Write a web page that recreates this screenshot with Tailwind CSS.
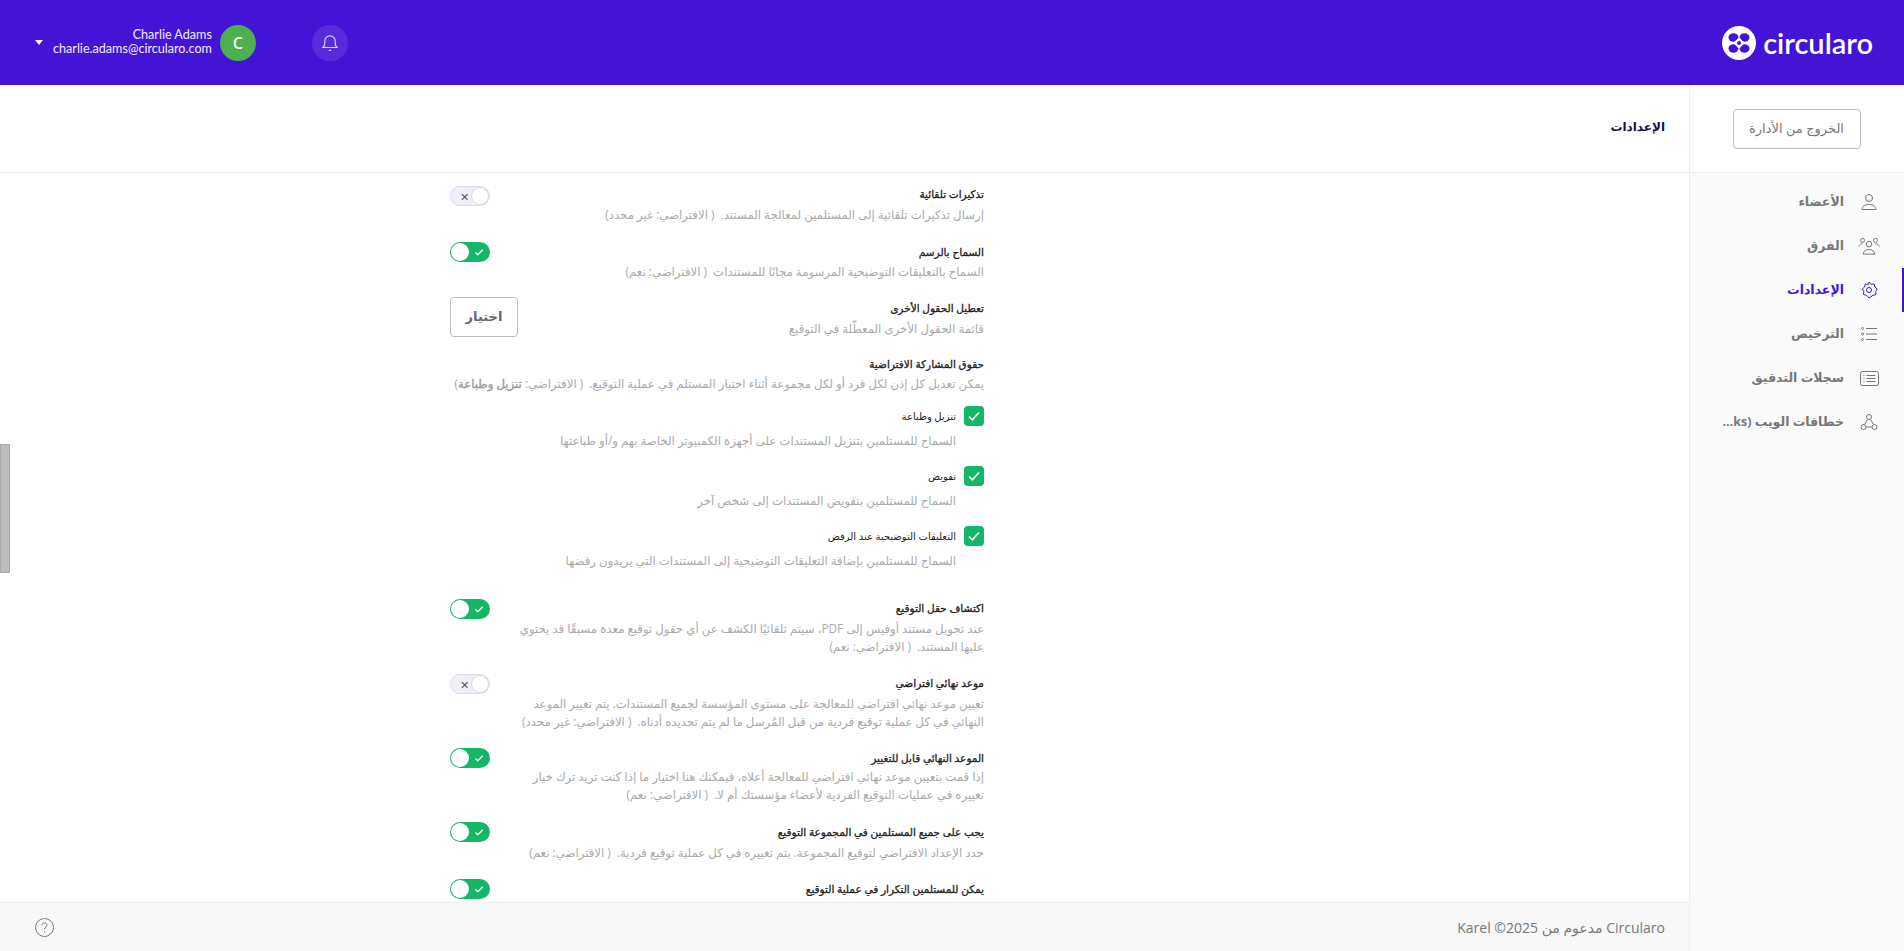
<!DOCTYPE html>
<html lang="ar" dir="rtl">
<head>
  <meta charset="UTF-8" />
  <title>Circularo - الإعدادات</title>
  <script src="https://cdn.jsdelivr.net/npm/@tailwindcss/browser@4"></script>
</head>
<body class="h-[951px] overflow-hidden bg-white font-['Open_Sans','DejaVu_Sans',sans-serif]">

  <!-- Header -->
  <header class="h-[85px] bg-[#4314d6] flex items-center justify-between pr-[31px] pl-[35px]">
    <div dir="ltr" class="flex items-center gap-[7px]">
      <svg class="w-[34px] h-[34px]" viewBox="0 0 34 34">
        <circle cx="17" cy="17" r="17" fill="#fff" />
        <g fill="#4314d6">
          <ellipse cx="11.500" cy="11.500" rx="5" ry="4.200" />
          <ellipse cx="22.500" cy="11.500" rx="5" ry="4.200" />
          <ellipse cx="11.500" cy="22.500" rx="5" ry="4.200" />
          <ellipse cx="22.500" cy="22.500" rx="5" ry="4.200" />
          <rect x="13" y="13" width="8" height="8" fill="#fff" transform="rotate(45 17 17)" />
          <circle cx="17" cy="17" r="2" />
        </g>
      </svg>
      <span class="text-white text-[29px] leading-none font-semibold font-['Lato',sans-serif]">circularo</span>
    </div>
    <div class="flex items-center gap-[56px]">
      <div class="w-9 h-9 rounded-full bg-white/10 flex items-center justify-center">
        <svg class="w-[18px] h-[18px]" viewBox="0 0 18 18" fill="none" stroke="#d8ceff" stroke-width="1.200">
          <path d="M2 13.500h14c-1.300-1.200-1.800-2.400-1.800-4.500V7A5.200 5.200 0 0 0 3.800 7v2c0 2.100-.5 3.300-1.800 4.500z" />
          <path d="M7.800 16c.8.600 1.600.600 2.400 0" />
        </svg>
      </div>
      <div class="flex items-center gap-2">
        <div class="w-9 h-9 rounded-full bg-[#4caf50] text-white flex items-center justify-center text-[16px] font-semibold">C</div>
        <div dir="ltr" class="-mt-px text-right text-[#f1edff] text-[12.6px] leading-[14px] font-['Lato',sans-serif]">
          <div>Charlie Adams</div>
          <div>charlie.adams@circularo.com</div>
        </div>
        <div class="w-0 h-0 border-x-[4px] border-x-transparent border-t-[5px] border-t-white mr-[2px]"></div>
      </div>
    </div>
  </header>

  <div class="flex h-[866px]">
    <!-- Sidebar -->
    <aside class="w-[215px] shrink-0 border-l border-[#eeeeee] bg-[#fafafa] flex flex-col">
      <div class="h-[88px] bg-white border-b border-[#eeeeee] flex items-center justify-center">
        <button class="w-[128px] h-10 mr-[1px] rounded border border-[#bdbdbd] bg-white text-[13px] text-[#777777]">الخروج من الأدارة</button>
      </div>
      <nav class="pt-[7px] text-[12.5px] font-bold text-[#777777]">
        <a class="h-11 flex items-center gap-[16px] pr-[26px]">
          <svg class="w-[18px] h-[18px]" viewBox="0 0 18 18" fill="none" stroke="#777777" stroke-width="1"><circle cx="9" cy="5" r="3.500" /><path d="M2 16.500c0-3 2.500-5 7-5s7 2 7 5z" /></svg>
          <span>الأعضاء</span>
        </a>
        <a class="h-11 flex items-center gap-[16px] pr-[26px]">
          <svg class="w-[18px] h-[18px] scale-125" viewBox="0 0 18 18" fill="none" stroke="#777777" stroke-width=".8"><circle cx="9" cy="7.500" r="2.200" /><path d="M4.500 15.500c0-2.200 1.800-3.700 4.500-3.700s4.500 1.500 4.500 3.700z" /><circle cx="3.800" cy="4.500" r="1.600" /><circle cx="14.200" cy="4.500" r="1.600" /><path d="M.8 9.500c.4-1.500 1.500-2.300 3-2.300M17.200 9.500c-.4-1.500-1.500-2.300-3-2.300" /></svg>
          <span>الفرق</span>
        </a>
        <a class="relative h-11 flex items-center gap-[16px] pr-[26px] text-[#4314d6]">
          <span class="absolute right-0 top-0 w-[2px] h-11 bg-[#4314d6]"></span>
          <svg class="w-[18px] h-[18px]" viewBox="0 0 18 18" fill="none" stroke="#4314d6" stroke-width="1"><path d="M9 1l2 2.300 3.200-.300.700 3 2.300 2-1.500 2.500.3 3-3 .8L9 17l-2.500-2.700-3-.8.300-3L2.300 8l2.300-2 .7-3 3.200.3z" stroke-linejoin="round" /><circle cx="9" cy="9" r="2.500" /></svg>
          <span>الإعدادات</span>
        </a>
        <a class="h-11 flex items-center gap-[16px] pr-[26px]">
          <svg class="w-[18px] h-[18px]" viewBox="0 0 18 18" fill="none" stroke="#777777" stroke-width="1"><path d="M6 3.500h11M6 9h11M6 14.500h11" /><circle cx="2.500" cy="3.500" r="1" /><circle cx="2.500" cy="9" r="1" /><circle cx="2.500" cy="14.500" r="1" /></svg>
          <span>الترخيص</span>
        </a>
        <a class="h-11 flex items-center gap-[16px] pr-[25px]">
          <svg class="w-[19px] h-[15px]" viewBox="0 0 19 15" fill="none" stroke="#777777" stroke-width="1"><rect x=".5" y=".5" width="18" height="14" rx="2" /><path d="M6.500 4.500h9M6.500 7.500h9M6.500 10.500h9M3.500 4.500h1M3.500 7.500h1M3.500 10.500h1" /></svg>
          <span>سجلات التدقيق</span>
        </a>
        <a class="h-11 flex items-center gap-[16px] pr-[26px]">
          <svg class="w-[18px] h-[18px] shrink-0" viewBox="0 0 18 18" fill="none" stroke="#777777" stroke-width="1"><circle cx="9" cy="4" r="2.500" /><circle cx="3.500" cy="14" r="2.500" /><circle cx="14.500" cy="14" r="2.500" /><path d="M7.500 6.500L4.500 11.500M10.500 6.500l3 5M6 14h6" /></svg>
          <span class="w-[126px] truncate">خطافات الويب (Webhooks)</span>
        </a>
      </nav>
    </aside>

    <!-- Main -->
    <div class="flex-1 flex flex-col min-w-0">
      <div class="h-[88px] shrink-0 border-b border-[#eeeeee] flex items-center pr-6">
        <h1 class="text-[12px] font-bold text-[#1a1047] -mt-[3px]">الإعدادات</h1>
      </div>

      <main class="relative flex-1 overflow-hidden">
        <!-- scrollbar handle -->
        <div class="absolute left-0 top-[271px] w-[10px] h-[129px] bg-[#bdbdbd] border border-[#aaaaaa]"></div>

        <div class="w-[534px] mr-[705px] pt-[11px] text-[11.75px]">
          <div class="flex justify-between items-start">
            <div>
              <h3 class="text-[10.5px] leading-5 [-webkit-text-stroke:0.3px_#222222] text-[#222222]">تذكيرات تلقائية</h3>
              <p class="mt-px leading-[18px] text-[#aaaaaa]">إرسال تذكيرات تلقائية إلى المستلمين لمعالجة المستند.&nbsp; ( الافتراضي: غير محدد)</p>
            </div>
            <div class="mt-[2px] w-10 h-5 rounded-full bg-[#f0eef8] border border-[#dddbe8] flex items-center justify-between">
              <div class="w-[18px] h-[18px] rounded-full bg-white border border-[#dddbe8]"></div>
              <span class="ml-[9px] text-[11px] leading-none text-[#555555]">✕</span>
            </div>
          </div>

          <div class="mt-5 flex justify-between items-start">
            <div class="-mt-px">
              <h3 class="text-[10.5px] leading-5 [-webkit-text-stroke:0.3px_#222222] text-[#222222]">السماح بالرسم</h3>
              <p class="leading-[18px] text-[#aaaaaa]">السماح بالتعليقات التوضيحية المرسومة مجانًا للمستندات&nbsp; ( الافتراضي: نعم)</p>
            </div>
            <div class="-mt-px w-10 h-5 rounded-full bg-[#13b765] flex flex-row-reverse items-center justify-between px-[1px]">
              <div class="w-[18px] h-[18px] rounded-full bg-white"></div>
              <svg class="w-[10px] h-[10px] mr-[5px]" viewBox="0 0 10 10" fill="none" stroke="#fff" stroke-width="1.300"><path d="M1.500 5.500l2.300 2.300 5-5" /></svg>
            </div>
          </div>

          <div class="mt-[17px] flex justify-between items-start">
            <div class="pt-px">
              <h3 class="text-[10.5px] leading-5 [-webkit-text-stroke:0.3px_#222222] text-[#222222]">تعطيل الحقول الأخرى</h3>
              <p class="mt-px leading-[18px] text-[#aaaaaa]">قائمة الحقول الأخرى المعطّلة في التوقيع</p>
            </div>
            <button class="w-[68px] h-10 rounded border border-[#bdbdbd] bg-white text-[13px] font-bold text-[#666666]">اختيار</button>
          </div>

          <div class="mt-[17px]">
            <h3 class="text-[10.5px] leading-5 [-webkit-text-stroke:0.3px_#222222] text-[#222222]">حقوق المشاركة الافتراضية</h3>
            <p class="leading-[18px] whitespace-nowrap text-[#aaaaaa]">يمكن تعديل كل إذن لكل فرد أو لكل مجموعة أثناء اختيار المستلم في عملية التوقيع.&nbsp; ( الافتراضي: <span class="[-webkit-text-stroke:0.3px_#999999] text-[#999999]">تنزيل وطباعة</span>)</p>
          </div>

          <div class="mt-[14px] flex items-center gap-2">
            <div class="w-5 h-5 rounded bg-[#13b765] flex items-center justify-center">
              <svg class="w-[14px] h-[14px]" viewBox="0 0 14 14" fill="none" stroke="#fff" stroke-width="1.600"><path d="M2 7.500l3.400 3.400L12 3.500" /></svg>
            </div>
            <span class="text-[10px] text-[#222222]">تنزيل وطباعة</span>
          </div>
          <p class="mt-[5px] mr-7 leading-[18px] text-[#aaaaaa]">السماح للمستلمين بتنزيل المستندات على أجهزة الكمبيوتر الخاصة بهم و/أو طباعتها</p>

          <div class="mt-[17px] flex items-center gap-2">
            <div class="w-5 h-5 rounded bg-[#13b765] flex items-center justify-center">
              <svg class="w-[14px] h-[14px]" viewBox="0 0 14 14" fill="none" stroke="#fff" stroke-width="1.600"><path d="M2 7.500l3.400 3.400L12 3.500" /></svg>
            </div>
            <span class="text-[10px] text-[#222222]">تفويض</span>
          </div>
          <p class="mt-[5px] mr-7 leading-[18px] text-[#aaaaaa]">السماح للمستلمين بتفويض المستندات إلى شخص آخر</p>

          <div class="mt-[17px] flex items-center gap-2">
            <div class="w-5 h-5 rounded bg-[#13b765] flex items-center justify-center">
              <svg class="w-[14px] h-[14px]" viewBox="0 0 14 14" fill="none" stroke="#fff" stroke-width="1.600"><path d="M2 7.500l3.400 3.400L12 3.500" /></svg>
            </div>
            <span class="text-[10px] text-[#222222]">التعليقات التوضيحية عند الرفض</span>
          </div>
          <p class="mt-[5px] mr-7 leading-[18px] text-[#aaaaaa]">السماح للمستلمين بإضافة التعليقات التوضيحية إلى المستندات التي يريدون رفضها</p>

          <div class="mt-[29px] flex justify-between items-start">
            <div class="w-[470px]">
              <h3 class="text-[10.5px] leading-5 [-webkit-text-stroke:0.3px_#222222] text-[#222222]">اكتشاف حقل التوقيع</h3>
              <p class="mt-px leading-[18px] text-[#aaaaaa]">عند تحويل مستند أوفيس إلى PDF، سيتم تلقائيًا الكشف عن أي حقول توقيع معدة مسبقًا قد يحتوي عليها المستند.&nbsp; ( الافتراضي: نعم)</p>
            </div>
            <div class="mt-px w-10 h-5 rounded-full bg-[#13b765] flex flex-row-reverse items-center justify-between px-[1px]">
              <div class="w-[18px] h-[18px] rounded-full bg-white"></div>
              <svg class="w-[10px] h-[10px] mr-[5px]" viewBox="0 0 10 10" fill="none" stroke="#fff" stroke-width="1.300"><path d="M1.500 5.500l2.300 2.300 5-5" /></svg>
            </div>
          </div>

          <div class="mt-[18px] flex justify-between items-start">
            <div class="w-[470px]">
              <h3 class="text-[10.5px] leading-5 [-webkit-text-stroke:0.3px_#222222] text-[#222222]">موعد نهائي افتراضي</h3>
              <p class="mt-px leading-[18px] text-[#aaaaaa]">تعيين موعد نهائي افتراضي للمعالجة على مستوى المؤسسة لجميع المستندات. يتم تغيير الموعد النهائي في كل عملية توقيع فردية من قبل المُرسل ما لم يتم تحديده أدناه.&nbsp; ( الافتراضي: غير محدد)</p>
            </div>
            <div class="mt-px w-10 h-5 rounded-full bg-[#f0eef8] border border-[#dddbe8] flex items-center justify-between">
              <div class="w-[18px] h-[18px] rounded-full bg-white border border-[#dddbe8]"></div>
              <span class="ml-[9px] text-[11px] leading-none text-[#555555]">✕</span>
            </div>
          </div>

          <div class="mt-[18px] flex justify-between items-start">
            <div class="w-[470px]">
              <h3 class="text-[10.5px] leading-5 [-webkit-text-stroke:0.3px_#222222] text-[#222222]">الموعد النهائي قابل للتغيير</h3>
              <p class="-mt-px leading-[18px] text-[#aaaaaa]">إذا قمت بتعيين موعد نهائي افتراضي للمعالجة أعلاه، فيمكنك هنا اختيار ما إذا كنت تريد ترك خيار تغييره في عمليات التوقيع الفردية لأعضاء مؤسستك أم لا.&nbsp; ( الافتراضي: نعم)</p>
            </div>
            <div class="w-10 h-5 rounded-full bg-[#13b765] flex flex-row-reverse items-center justify-between px-[1px]">
              <div class="w-[18px] h-[18px] rounded-full bg-white"></div>
              <svg class="w-[10px] h-[10px] mr-[5px]" viewBox="0 0 10 10" fill="none" stroke="#fff" stroke-width="1.300"><path d="M1.500 5.500l2.300 2.300 5-5" /></svg>
            </div>
          </div>

          <div class="mt-[19px] flex justify-between items-start">
            <div class="w-[470px]">
              <h3 class="text-[10.5px] leading-5 [-webkit-text-stroke:0.3px_#222222] text-[#222222]">يجب على جميع المستلمين في المجموعة التوقيع</h3>
              <p class="mt-px leading-[18px] text-[#aaaaaa]">حدد الإعداد الافتراضي لتوقيع المجموعة. يتم تغييره في كل عملية توقيع فردية.&nbsp; ( الافتراضي: نعم)</p>
            </div>
            <div class="w-10 h-5 rounded-full bg-[#13b765] flex flex-row-reverse items-center justify-between px-[1px]">
              <div class="w-[18px] h-[18px] rounded-full bg-white"></div>
              <svg class="w-[10px] h-[10px] mr-[5px]" viewBox="0 0 10 10" fill="none" stroke="#fff" stroke-width="1.300"><path d="M1.500 5.500l2.300 2.300 5-5" /></svg>
            </div>
          </div>

          <div class="mt-[18px] flex justify-between items-start">
            <div class="w-[470px]">
              <h3 class="text-[10.5px] leading-5 [-webkit-text-stroke:0.3px_#222222] text-[#222222]">يمكن للمستلمين التكرار في عملية التوقيع</h3>
            </div>
            <div class="w-10 h-5 rounded-full bg-[#13b765] flex flex-row-reverse items-center justify-between px-[1px]">
              <div class="w-[18px] h-[18px] rounded-full bg-white"></div>
              <svg class="w-[10px] h-[10px] mr-[5px]" viewBox="0 0 10 10" fill="none" stroke="#fff" stroke-width="1.300"><path d="M1.500 5.500l2.300 2.300 5-5" /></svg>
            </div>
          </div>
        </div>
      </main>

      <footer class="h-[49px] shrink-0 border-t border-[#eeeeee] bg-[#f9f9f9] bg-[radial-gradient(#f5f5f5_1px,transparent_1px)] bg-[length:4px_4px] flex items-center justify-between pr-6 pl-[35px]">
        <span class="text-[14px] text-[#777777]">Circularo مدعوم من 2025© Karel</span>
        <svg class="w-[19px] h-[19px]" viewBox="0 0 19 19" fill="none" stroke="#777777" stroke-width="1"><circle cx="9.500" cy="9.500" r="9" /><path d="M7 7.300c0-1.500 1.100-2.400 2.500-2.400s2.500.9 2.500 2.300c0 1.900-2.500 1.900-2.500 4" /><path d="M9.500 13.300v1.200" /></svg>
      </footer>
    </div>
  </div>
</body>
</html>
